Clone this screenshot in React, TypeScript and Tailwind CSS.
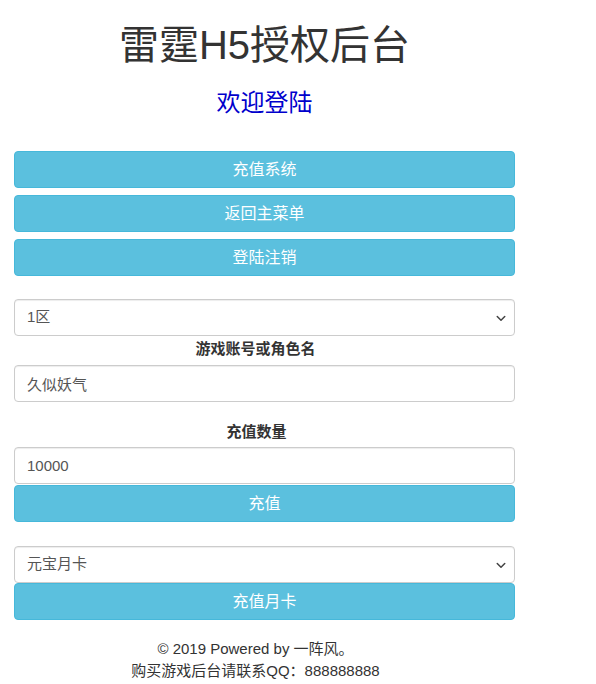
import React from 'react';

const font = { fontFamily: '"Liberation Sans", "Noto Sans CJK SC", sans-serif' };

const InfoButton = ({ label, className = '' }: { label: string; className?: string }) => (
  <button
    type="button"
    className={`w-full h-[37px] rounded-[4px] border border-[#46b8da] bg-[#5bc0de] text-white text-[16px] leading-[35px] ${className}`}
  >
    {label}
  </button>
);

const Chevron = () => (
  <svg className="pointer-events-none absolute right-[8px] top-1/2 -translate-y-1/2" width="12" height="12" viewBox="0 0 16 16">
    <path d="M3 6l5 5 5-5" fill="none" stroke="#444" strokeWidth="2" strokeLinecap="round" strokeLinejoin="round" />
  </svg>
);

const SelectBox = ({ value }: { value: string }) => (
  <div className="relative">
    <select
      defaultValue={value}
      className="w-full h-[37px] appearance-none rounded-[4px] border border-[#ccc] bg-white px-3 text-[15px] text-[#555] shadow-[inset_0_1px_1px_rgba(0,0,0,0.075)] outline-none"
    >
      <option>{value}</option>
    </select>
    <Chevron />
  </div>
);

const TextBox = ({ value }: { value: string }) => (
  <input
    defaultValue={value}
    className="block w-full h-[37px] rounded-[4px] border border-[#ccc] bg-white px-3 text-[15px] text-[#555] shadow-[inset_0_1px_1px_rgba(0,0,0,0.075)] outline-none"
  />
);

const App = () => {
  return (
    <div className="min-h-[684px] bg-white text-[#333]" style={font}>
      <div className="ml-[14px] w-[501px] pt-[23px]">
        <h1 className="text-center text-[40px] leading-[44px] font-normal text-[#333]">雷霆H5授权后台</h1>
        <h2 className="mt-[21px] text-center text-[24px] leading-[30px] font-normal text-[#0000cc]">欢迎登陆</h2>

        <div className="mt-[33px] flex flex-col gap-[7px]">
          <InfoButton label="充值系统" />
          <InfoButton label="返回主菜单" />
          <InfoButton label="登陆注销" />
        </div>

        <div className="mt-[23px]">
          <SelectBox value="1区" />
        </div>
        <div className="h-[29px] pr-[18px] text-center text-[15px] font-bold leading-[25px] text-[#333]">游戏账号或角色名</div>
        <TextBox value="久似妖气" />

        <div className="mt-[20px] h-[25px] pr-[16px] text-center text-[15px] font-bold leading-[20px] text-[#333]">充值数量</div>
        <TextBox value="10000" />
        <InfoButton label="充值" className="mt-[1px]" />

        <div className="mt-[24px]">
          <SelectBox value="元宝月卡" />
        </div>
        <InfoButton label="充值月卡" />

        <div className="mt-[18px] pr-[18px] text-center text-[15px] leading-[22px] text-[#333]">
          <p>© 2019 Powered by 一阵风。</p>
          <p>购买游戏后台请联系QQ：888888888</p>
        </div>
      </div>
    </div>
  );
};

export default App;
